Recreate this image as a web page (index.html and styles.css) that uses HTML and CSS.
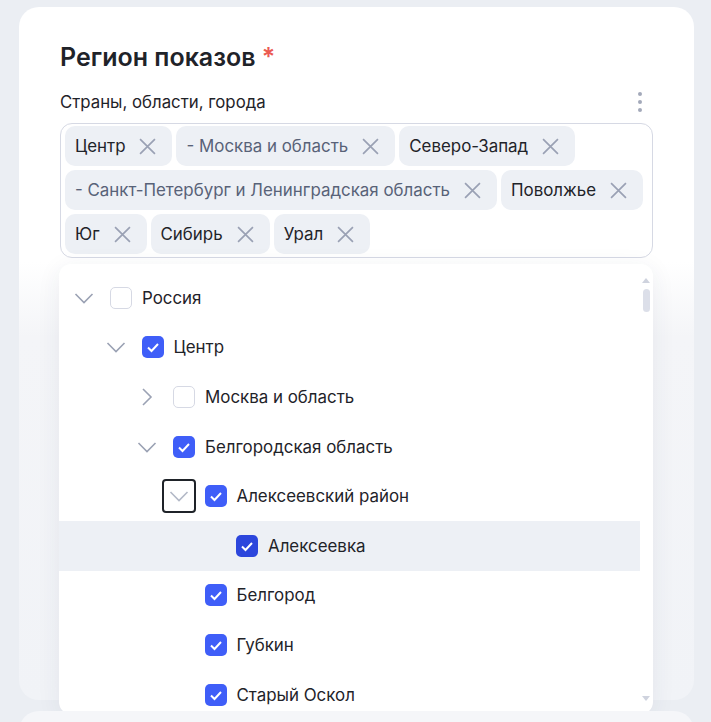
FILE: index.html
```html
<!DOCTYPE html>
<html lang="ru">
<head>
    <meta charset="UTF-8">
    <meta name="viewport" content="width=device-width, initial-scale=1.0">
    <title>Регион показов</title>
    <link rel="stylesheet" href="styles.css">
</head>
<body>
    <div class="card">
        <h2 class="title">Регион показов <span class="req">*</span></h2>

        <div class="field-head">
            <label>Страны, области, города</label>
            <div class="kebab"><i></i><i></i><i></i></div>
        </div>

        <div class="tags">
            <span class="tag">Центр<svg class="tag-x" viewBox="0 0 16 16"><path d="M1 1l14 14M15 1L1 15"/></svg></span>
            <span class="tag sub">- Москва и область<svg class="tag-x" viewBox="0 0 16 16"><path d="M1 1l14 14M15 1L1 15"/></svg></span>
            <span class="tag">Северо-Запад<svg class="tag-x" viewBox="0 0 16 16"><path d="M1 1l14 14M15 1L1 15"/></svg></span>
            <span class="tag sub">- Санкт-Петербург и Ленинградская область<svg class="tag-x" viewBox="0 0 16 16"><path d="M1 1l14 14M15 1L1 15"/></svg></span>
            <span class="tag">Поволжье<svg class="tag-x" viewBox="0 0 16 16"><path d="M1 1l14 14M15 1L1 15"/></svg></span>
            <span class="tag">Юг<svg class="tag-x" viewBox="0 0 16 16"><path d="M1 1l14 14M15 1L1 15"/></svg></span>
            <span class="tag">Сибирь<svg class="tag-x" viewBox="0 0 16 16"><path d="M1 1l14 14M15 1L1 15"/></svg></span>
            <span class="tag">Урал<svg class="tag-x" viewBox="0 0 16 16"><path d="M1 1l14 14M15 1L1 15"/></svg></span>
        </div>

        <!-- dropdown with region tree -->
        <div class="dropdown">
            <ul class="tree">
                <li class="row lv0">
                    <span class="toggle"><svg viewBox="0 0 20 20"><path d="M1.5 6l8.5 8.5 8.5-8.5"/></svg></span>
                    <span class="box"></span>
                    <span class="name">Россия</span>
                </li>
                <li class="row lv1">
                    <span class="toggle"><svg viewBox="0 0 20 20"><path d="M1.5 6l8.5 8.5 8.5-8.5"/></svg></span>
                    <span class="box checked"><svg viewBox="0 0 22 22"><path d="M6 11.5l3.5 3.5 6.5-7"/></svg></span>
                    <span class="name">Центр</span>
                </li>
                <li class="row lv2">
                    <span class="toggle"><svg viewBox="0 0 20 20"><path d="M6 2l8 8-8 8"/></svg></span>
                    <span class="box"></span>
                    <span class="name">Москва и область</span>
                </li>
                <li class="row lv2">
                    <span class="toggle"><svg viewBox="0 0 20 20"><path d="M1.5 6l8.5 8.5 8.5-8.5"/></svg></span>
                    <span class="box checked"><svg viewBox="0 0 22 22"><path d="M6 11.5l3.5 3.5 6.5-7"/></svg></span>
                    <span class="name">Белгородская область</span>
                </li>
                <li class="row lv3">
                    <span class="toggle focused"><svg viewBox="0 0 20 20"><path d="M1.5 6l8.5 8.5 8.5-8.5"/></svg></span>
                    <span class="box checked"><svg viewBox="0 0 22 22"><path d="M6 11.5l3.5 3.5 6.5-7"/></svg></span>
                    <span class="name">Алексеевский район</span>
                </li>
                <li class="row lv4 hover">
                    <span class="toggle empty"></span>
                    <span class="box checked"><svg viewBox="0 0 22 22"><path d="M6 11.5l3.5 3.5 6.5-7"/></svg></span>
                    <span class="name">Алексеевка</span>
                </li>
                <li class="row lv3">
                    <span class="toggle empty"></span>
                    <span class="box checked"><svg viewBox="0 0 22 22"><path d="M6 11.5l3.5 3.5 6.5-7"/></svg></span>
                    <span class="name">Белгород</span>
                </li>
                <li class="row lv3">
                    <span class="toggle empty"></span>
                    <span class="box checked"><svg viewBox="0 0 22 22"><path d="M6 11.5l3.5 3.5 6.5-7"/></svg></span>
                    <span class="name">Губкин</span>
                </li>
                <li class="row lv3">
                    <span class="toggle empty"></span>
                    <span class="box checked"><svg viewBox="0 0 22 22"><path d="M6 11.5l3.5 3.5 6.5-7"/></svg></span>
                    <span class="name">Старый Оскол</span>
                </li>
            </ul>

            <div class="scrollbar">
                <span class="arrow up"></span>
                <span class="thumb"></span>
                <span class="arrow down"></span>
            </div>
        </div>
    </div>

    <div class="card next"></div>
</body>
</html>
```

FILE: styles.css
```css
*{
    padding: 0;
    margin: 0;
    box-sizing: border-box;
}
body{
    background-color: #ebeef3;
    font-family: Inter, "Noto Sans", sans-serif;
    color: #1f2329;
    padding: 7px 17px 0 19px;
    height: 722px;
    overflow: hidden;
}
.card{
    position: relative;
    width: 675px;
    height: 693px;
    background: linear-gradient(#fff 0, #fff 255px, #f4f5f8 330px, #f1f3f7 100%);
    border-radius: 20px;
    padding: 35px 41px 0 41px;
}
.card.next{
    margin-top: 11px;
    height: 40px;
    background: #f5f6f9;
}
.title{
    font-size: 25px;
    line-height: 30px;
    font-weight: 600;
}
.req{
    color: #eb5a52;
}

.field-head{
    margin-top: 20px;
    display: flex;
    align-items: center;
    justify-content: space-between;
    height: 20px;
    font-size: 16.8px;
}
.kebab{
    display: flex;
    flex-direction: column;
    gap: 4px;
    margin-right: 11px;
}
.kebab i{
    width: 4px;
    height: 4px;
    border-radius: 50%;
    background-color: #a3a9ba;
}

.tags{
    margin-top: 11px;
    border: 1px solid #d6d9e4;
    border-radius: 12px;
    padding: 2px 3px 3px 4px;
    display: flex;
    flex-wrap: wrap;
    gap: 4px;
}
.tag{
    height: 40px;
    display: flex;
    align-items: center;
    gap: 14px;
    padding: 0 16px 0 10px;
    background-color: #edf0f5;
    border-radius: 10px;
    font-size: 16.9px;
}
.tag.sub{
    color: #586278;
}
.tag-x{
    width: 17px;
    height: 17px;
    fill: none;
    stroke: #9aa1b4;
    stroke-width: 1.6;
}

.dropdown{
    position: absolute;
    top: 257px;
    left: 40px;
    width: 594px;
    height: 450px;
    background-color: #fff;
    border-radius: 12px;
    box-shadow: 0 4px 24px rgba(40, 50, 80, 0.07);
    overflow: hidden;
}
.tree{
    list-style: none;
    padding-top: 9px;
    margin-right: 13px;
}
.row{
    height: 49.6px;
    display: flex;
    align-items: center;
    font-size: 16.9px;
}
.row.hover{
    background-color: #edf0f5;
}
.lv0{ padding-left: 8px; }
.lv1{ padding-left: 39.5px; }
.lv2{ padding-left: 71px; }
.lv3{ padding-left: 102.5px; }
.lv4{ padding-left: 134px; }

.toggle{
    width: 34px;
    height: 34px;
    margin-right: 9px;
    display: flex;
    align-items: center;
    justify-content: center;
    border-radius: 4px;
}
.toggle svg{
    width: 20px;
    height: 20px;
    fill: none;
    stroke: #9ba2b4;
    stroke-width: 1.6;
}
.toggle.focused{
    border: 2px solid #1f2329;
}
.toggle.focused svg{
    stroke: #b3b9c7;
}
.box{
    width: 22px;
    height: 22px;
    margin-right: 10px;
    border: 1px solid #d6d9e4;
    border-radius: 5px;
    background-color: #fff;
}
.box.checked{
    border: none;
    background-color: #3f5ef8;
}
.row.hover .box.checked{
    background-color: #2c46dc;
}
.box svg{
    display: block;
    width: 22px;
    height: 22px;
    fill: none;
    stroke: #fff;
    stroke-width: 2;
}

.scrollbar{
    position: absolute;
    top: 14px;
    right: 2px;
    bottom: 13px;
    width: 10px;
    display: flex;
    flex-direction: column;
    align-items: center;
}
.thumb{
    margin-top: 6px;
    width: 7px;
    height: 23px;
    border-radius: 4px;
    background-color: #dcdfe9;
}
.arrow{
    width: 0;
    height: 0;
    border-left: 4px solid transparent;
    border-right: 4px solid transparent;
}
.arrow.up{
    border-bottom: 5px solid #cfd3de;
}
.arrow.down{
    margin-top: auto;
    border-top: 5px solid #cfd3de;
}
```
